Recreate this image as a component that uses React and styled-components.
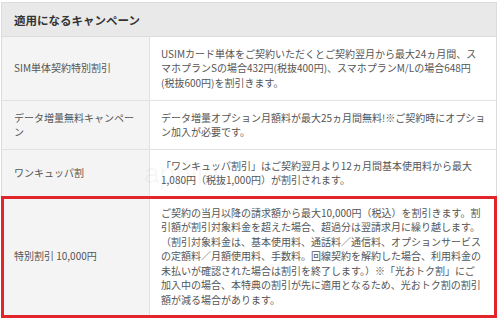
import styled, { createGlobalStyle } from "styled-components";

const GlobalStyle = createGlobalStyle`
  body {
    margin: 0;
    background: #fff;
    font-family: "Noto Sans CJK JP", "Noto Sans", sans-serif;
  }
`;

const Page = styled.div`
  padding: 2px 3px 0 1px;
  width: 500px;
  height: 318px;
  box-sizing: border-box;
  overflow: hidden;
`;

const Table = styled.div`
  border: 1px solid #dcdcdc;
  border-bottom: none;
  color: #555;
`;

const Header = styled.div`
  background: #e9e9e9;
  height: 33px;
  display: flex;
  align-items: center;
  padding-left: 12px;
  font-size: 11.5px;
  font-weight: 700;
  color: #333;
  border-bottom: 1px solid #dcdcdc;
`;

const Row = styled.div`
  display: grid;
  grid-template-columns: 148px 1fr;
  height: ${(p) => p.h}px;
  border-bottom: 1px solid #e2e2e2;
  position: relative;
  outline: ${(p) => (p.highlight ? "3px solid #e1252b" : "none")};
  outline-offset: -2px;
`;

const Label = styled.div`
  background: #f4f4f4;
  border-right: 1px solid #e2e2e2;
  padding: 0 12px;
  display: flex;
  align-items: center;
  font-size: 10px;
  line-height: 14.4px;
`;

const Text = styled.div`
  padding: 0 11px;
  display: flex;
  align-items: center;
  font-size: 10px;
  line-height: 14.4px;
  white-space: nowrap;
`;

const Mark = styled.span`
  position: absolute;
  left: 142px;
  top: 8px;
  font-family: "Liberation Sans", sans-serif;
  font-size: 28px;
  color: rgba(0, 0, 0, 0.05);
  pointer-events: none;
`;

export default function App() {
  return (
    <>
      <GlobalStyle />
      <Page>
        <Table>
          <Header>適用になるキャンペーン</Header>
          <Row h={63}>
            <Label>SIM単体契約特別割引</Label>
            <Text>
              <div>
                USIMカード単体をご契約いただくとご契約翌月から最大24ヵ月間、ス
                <br />
                マホプランSの場合432円(税抜400円)、スマホプランM/Lの場合648円
                <br />
                (税抜600円)を割引きます。
              </div>
            </Text>
          </Row>
          <Row h={48}>
            <Label>
              データ増量無料キャンペー
              <br />ン
            </Label>
            <Text>
              <div>
                データ増量オプション月額料が最大25ヵ月間無料!※ご契約時にオプショ
                <br />
                ン加入が必要です。
              </div>
            </Text>
          </Row>
          <Row h={46}>
            <Label>ワンキュッパ割</Label>
            <Text>
              <div>
                「ワンキュッパ割引」はご契約翌月より12ヵ月間基本使用料から最大
                <br />
                1,080円（税抜1,000円）が割引されます。
              </div>
            </Text>
            <Mark>applio</Mark>
          </Row>
          <Row h={119} highlight>
            <Label>特別割引 10,000円</Label>
            <Text>
              <div>
                ご契約の当月以降の請求額から最大10,000円（税込）を割引きます。割
                <br />
                引額が割引対象料金を超えた場合、超過分は翌請求月に繰り越します。
                <br />
                （割引対象料金は、基本使用料、通話料／通信料、オプションサービス
                <br />
                の定額料／月額使用料、手数料。回線契約を解約した場合、利用料金の
                <br />
                未払いが確認された場合は割引を終了します。）※「光おトク割」にご
                <br />
                加入中の場合、本特典の割引が先に適用となるため、光おトク割の割引
                <br />
                額が減る場合があります。
              </div>
            </Text>
          </Row>
        </Table>
      </Page>
    </>
  );
}
